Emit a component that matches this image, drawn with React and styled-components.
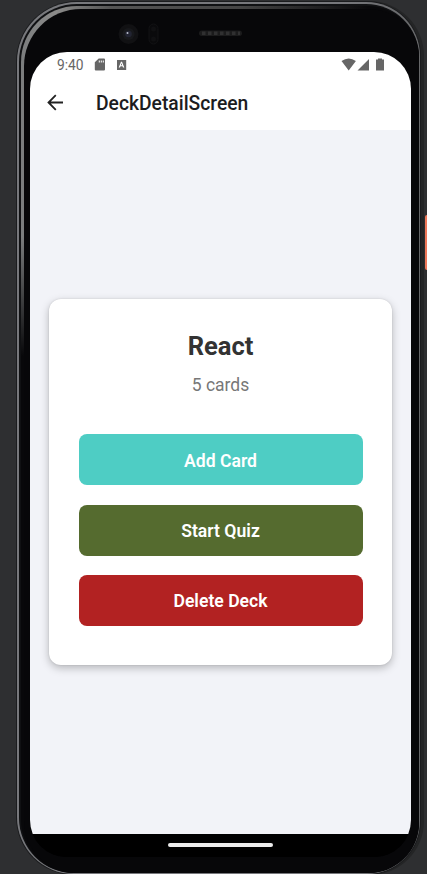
import React from 'react';
import styled, { createGlobalStyle } from 'styled-components';

const Global = createGlobalStyle`
  * { box-sizing: border-box; }
  html, body { margin: 0; height: 100%; overflow: hidden; background: #2e2f31; }
  body { font-family: Roboto, sans-serif; }
`;

const Desktop = styled.main`
  position: relative;
  width: 427px;
  height: 874px;
  overflow: hidden;
  padding: 2px 0 0 17px;
  background: #2e2f31;
`;

const Shell = styled.div`
  width: 403px;
  height: 872px;
  padding: 2px 1px 1px 2px;
  border-radius: 60px 54px 53px 57px;
  background: linear-gradient(90deg, #77787c 0%, #77787c 80%, #666769 100%);
  box-shadow: 0 0 0 1px #1b1c1e, 3px 0 0 1px #242526;
`;

const Groove = styled.div`
  height: 100%;
  padding: 2px 0 0 2px;
  border-radius: 58px 53px 52px 55px;
  background: #101113;
`;

const Rim = styled.div`
  height: 100%;
  padding: 3px 0 0 3px;
  border-radius: 56px 51px 51px 53px;
  background:
    linear-gradient(180deg, transparent 230px, #08080a 350px),
    linear-gradient(90deg, #7b7d7e 0, #8b8b8a 35px, #555 90px, #454545 220px, #08080a 350px);
`;

const Bezel = styled.div`
  display: flex;
  flex-direction: column;
  height: 100%;
  padding-left: 6px;
  border-radius: 57px 50px 50px 52px;
  background: #070709;
`;

const SensorStrip = styled.div`
  flex: 0 0 43px;
  height: 43px;

  svg { display: block; }
`;

const Screen = styled.div`
  display: flex;
  flex-direction: column;
  width: 381px;
  height: 805px;
  overflow: hidden;
  border-radius: 37px;
  background: #000;
`;

const StatusBar = styled.div`
  display: flex;
  align-items: center;
  flex: 0 0 26px;
  padding: 0 27px;
  background: #fff;
  color: #666;
  font-size: 13.8px;
  line-height: 26px;
`;

const Clock = styled.span`
  width: 36px;
`;

const StatusIcons = styled.svg`
  display: block;
  margin: -1px 0 0 ${({ $end }) => ($end ? 'auto' : '0')};
`;

const Header = styled.header`
  display: flex;
  align-items: center;
  flex: 0 0 52px;
  padding-left: 15px;
  background: #fff;
`;

const BackButton = styled.button`
  display: flex;
  width: 51px;
  padding: 0;
  margin-top: -2px;
  border: 0;
  background: none;
`;

const ScreenTitle = styled.h1`
  margin: 0;
  color: #1c1c1e;
  font-size: 19.3px;
  font-weight: 500;
  line-height: 24px;
`;

const Content = styled.section`
  flex: 1;
  padding: 169px 19px 0;
  background: #f2f3f8;
`;

const Card = styled.article`
  display: flex;
  flex-direction: column;
  height: 366px;
  padding: 31px 29px 0 30px;
  border-radius: 12px;
  background: #fff;
  text-align: center;
  box-shadow: 0 3px 8px rgba(0, 0, 0, 0.25), 0 0 2px rgba(0, 0, 0, 0.12);
`;

const DeckName = styled.h2`
  margin: 0;
  padding-right: 1px;
  color: #333;
  font-size: 25.5px;
  font-weight: 700;
  line-height: 32px;
`;

const CardCount = styled.p`
  margin: 11px 0 37.4px;
  padding-right: 1px;
  color: #777;
  font-size: 17.5px;
  line-height: 24px;
`;

const Actions = styled.div`
  display: flex;
  flex-direction: column;
  gap: 19.3px;
`;

const ActionButton = styled.button`
  height: 51px;
  padding: 2px 1px 0 0;
  border: 0;
  border-radius: 8px;
  background: ${({ $color }) => $color};
  color: #fff;
  font: 600 17.6px/24px Roboto, sans-serif;
`;

const NavigationBar = styled.div`
  display: flex;
  justify-content: center;
  flex: 0 0 23px;
  padding-top: 9px;
  background: #000;
`;

const HomeHandle = styled.div`
  width: 105px;
  height: 4px;
  border-radius: 2px;
  background: #ececec;
`;

const PowerKey = styled.div`
  position: absolute;
  top: 215px;
  right: 0;
  width: 2px;
  height: 55px;
  border-radius: 2px 0 0 2px;
  background: #ee7759;
`;

const Sensors = () => (
  <svg width="381" height="43" viewBox="30 9 381 43">
    <circle cx="128.5" cy="34" r="10" fill="#111113" />
    <circle cx="128.5" cy="34" r="6" fill="#17181b" />
    <circle cx="128.5" cy="34" r="3.3" fill="#222432" />
    <circle cx="127.5" cy="33" r="1" fill="#b9bccb" />
    <rect x="149" y="24" width="9" height="20" rx="4.5" fill="#0a0a0c" stroke="#121214" />
    <circle cx="153.5" cy="29" r="2.5" fill="#101012" />
    <circle cx="153.5" cy="39" r="2.5" fill="#101012" />
    <rect x="199" y="30.5" width="43" height="5.5" rx="2.7" fill="#1b1b1c" />
    <path d="M202 33.3h38" stroke="#303031" strokeWidth="3.5" strokeDasharray="3.5 2.5" />
  </svg>
);

const actions = [
  ['Add Card', '#4ecdc4'],
  ['Start Quiz', '#556b2f'],
  ['Delete Deck', '#b22222'],
];

export default function App() {
  return (
    <>
      <Global />
      <Desktop>
        <Shell>
          <Groove>
            <Rim>
              <Bezel>
                <SensorStrip><Sensors /></SensorStrip>
                <Screen>
                  <StatusBar>
                    <Clock>9:40</Clock>
                    <StatusIcons width="34" height="14" viewBox="93 57.5 34 14">
                      <path fill="#666" fillRule="evenodd" d="M98.7 58h5.3q1 0 1 1v10q0 1-1 1h-8.2q-1 0-1-1v-7.2ZM98.8 60v2h1v-2Zm2 0v2h1v-2Zm2 0v2h1v-2Z" />
                      <path fill="#666" fillRule="evenodd" d="M117 59.5h9.2V69.5H117ZM121 61.2l-2.3 5.8h1.3l.5-1.3h2l.5 1.3h1.3L122 61.2Zm.5 1.6.7 1.9h-1.4Z" />
                    </StatusIcons>
                    <StatusIcons $end width="43" height="14" viewBox="341 57.5 43 14">
                      <path fill="#666" d="M341.5 60.5q7.2-5 14.4 0l-7.2 9.5ZM369 58.5V70h-11.5ZM376 59h2v-1h4v1h2v11h-8Z" />
                    </StatusIcons>
                  </StatusBar>
                  <Header>
                    <BackButton aria-label="Back">
                      <svg width="20" height="20" viewBox="45 93 20 20" fill="none" stroke="#222" strokeWidth="1.8">
                        <path d="M63 102.5H48.8M55.8 95.2l-7.3 7.3 7.3 7.3" />
                      </svg>
                    </BackButton>
                    <ScreenTitle>DeckDetailScreen</ScreenTitle>
                  </Header>
                  <Content>
                    <Card>
                      <DeckName>React</DeckName>
                      <CardCount>5 cards</CardCount>
                      <Actions>
                        {actions.map(([label, color]) => (
                          <ActionButton key={label} $color={color}>{label}</ActionButton>
                        ))}
                      </Actions>
                    </Card>
                  </Content>
                  <NavigationBar><HomeHandle /></NavigationBar>
                </Screen>
              </Bezel>
            </Rim>
          </Groove>
        </Shell>
        <PowerKey />
      </Desktop>
    </>
  );
}
